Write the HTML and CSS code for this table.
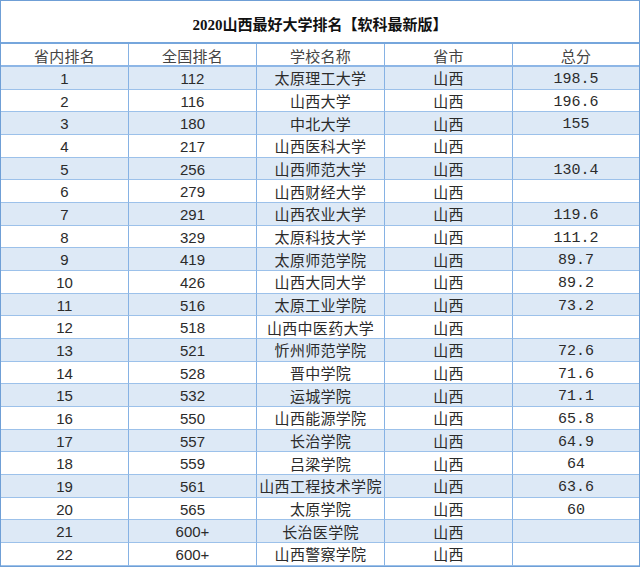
FILE: index.html
```html
<!DOCTYPE html>
<html lang="zh">
<head>
<meta charset="utf-8">
<title>2020山西最好大学排名</title>
<link rel="stylesheet" href="styles.css">
</head>
<body>
<div class="sheet">
  <div class="title">2020山西最好大学排名【软科最新版】</div>
  <div class="grid">
    <div class="cell head">省内排名</div><div class="cell head">全国排名</div><div class="cell head">学校名称</div><div class="cell head">省市</div><div class="cell head last">总分</div>

    <div class="cell num alt">1</div><div class="cell num alt">112</div><div class="cell alt">太原理工大学</div><div class="cell alt">山西</div><div class="cell score alt last">198.5</div>
    <div class="cell num">2</div><div class="cell num">116</div><div class="cell">山西大学</div><div class="cell">山西</div><div class="cell score last">196.6</div>
    <div class="cell num alt">3</div><div class="cell num alt">180</div><div class="cell alt">中北大学</div><div class="cell alt">山西</div><div class="cell score alt last">155</div>
    <div class="cell num">4</div><div class="cell num">217</div><div class="cell">山西医科大学</div><div class="cell">山西</div><div class="cell score last"></div>
    <div class="cell num alt">5</div><div class="cell num alt">256</div><div class="cell alt">山西师范大学</div><div class="cell alt">山西</div><div class="cell score alt last">130.4</div>
    <div class="cell num">6</div><div class="cell num">279</div><div class="cell">山西财经大学</div><div class="cell">山西</div><div class="cell score last"></div>
    <div class="cell num alt">7</div><div class="cell num alt">291</div><div class="cell alt">山西农业大学</div><div class="cell alt">山西</div><div class="cell score alt last">119.6</div>
    <div class="cell num">8</div><div class="cell num">329</div><div class="cell">太原科技大学</div><div class="cell">山西</div><div class="cell score last">111.2</div>
    <div class="cell num alt">9</div><div class="cell num alt">419</div><div class="cell alt">太原师范学院</div><div class="cell alt">山西</div><div class="cell score alt last">89.7</div>
    <div class="cell num">10</div><div class="cell num">426</div><div class="cell">山西大同大学</div><div class="cell">山西</div><div class="cell score last">89.2</div>
    <div class="cell num alt">11</div><div class="cell num alt">516</div><div class="cell alt">太原工业学院</div><div class="cell alt">山西</div><div class="cell score alt last">73.2</div>
    <div class="cell num">12</div><div class="cell num">518</div><div class="cell">山西中医药大学</div><div class="cell">山西</div><div class="cell score last"></div>
    <div class="cell num alt">13</div><div class="cell num alt">521</div><div class="cell alt">忻州师范学院</div><div class="cell alt">山西</div><div class="cell score alt last">72.6</div>
    <div class="cell num">14</div><div class="cell num">528</div><div class="cell">晋中学院</div><div class="cell">山西</div><div class="cell score last">71.6</div>
    <div class="cell num alt">15</div><div class="cell num alt">532</div><div class="cell alt">运城学院</div><div class="cell alt">山西</div><div class="cell score alt last">71.1</div>
    <div class="cell num">16</div><div class="cell num">550</div><div class="cell">山西能源学院</div><div class="cell">山西</div><div class="cell score last">65.8</div>
    <div class="cell num alt">17</div><div class="cell num alt">557</div><div class="cell alt">长治学院</div><div class="cell alt">山西</div><div class="cell score alt last">64.9</div>
    <div class="cell num">18</div><div class="cell num">559</div><div class="cell">吕梁学院</div><div class="cell">山西</div><div class="cell score last">64</div>
    <div class="cell num alt">19</div><div class="cell num alt">561</div><div class="cell alt">山西工程技术学院</div><div class="cell alt">山西</div><div class="cell score alt last">63.6</div>
    <div class="cell num">20</div><div class="cell num">565</div><div class="cell">太原学院</div><div class="cell">山西</div><div class="cell score last">60</div>
    <div class="cell num alt">21</div><div class="cell num alt">600+</div><div class="cell alt">长治医学院</div><div class="cell alt">山西</div><div class="cell score alt last"></div>
    <div class="cell num">22</div><div class="cell num">600+</div><div class="cell">山西警察学院</div><div class="cell">山西</div><div class="cell score last"></div>
  </div>
</div>
</body>
</html>
```

FILE: styles.css
```css
html, body {
  margin: 0;
  padding: 0;
  background: #ffffff;
}

.sheet {
  width: 640px;
  box-sizing: border-box;
  border: 1px solid #6f9fd6;
  font-family: "Noto Sans CJK SC", sans-serif;
  color: #2b2b2b;
}

.title {
  height: 43px;
  border-bottom: 2px solid #76a6dc;
  display: flex;
  align-items: center;
  justify-content: center;
  font-family: "Liberation Serif", "Noto Sans CJK SC", serif;
  font-weight: bold;
  font-size: 15px;
  color: #111;
  padding-top: 4px;
  box-sizing: border-box;
}

.grid {
  display: grid;
  grid-template-columns: 128px 128px 128px 128px 1fr;
  grid-template-rows: 23px repeat(22, 22.68px);
}

.cell {
  box-sizing: border-box;
  border-right: 1px solid #86b2e4;
  border-bottom: 1px solid #9cc1ea;
  display: flex;
  align-items: center;
  justify-content: center;
  font-size: 15px;
  line-height: 1;
  white-space: nowrap;
  letter-spacing: 0.3px;
}

.cell.last {
  border-right: none;
}

.head {
  border-bottom: 2px solid #8db6e6;
  color: #444;
  padding-top: 1px;
}

.alt {
  background: #dde9f6;
}

.num {
  font-family: "Liberation Sans", sans-serif;
  font-size: 15px;
  letter-spacing: 0;
  padding-top: 1px;
}

.score {
  font-family: "Liberation Mono", monospace;
  font-size: 15px;
  letter-spacing: 0;
  padding-top: 3px;
}
```
